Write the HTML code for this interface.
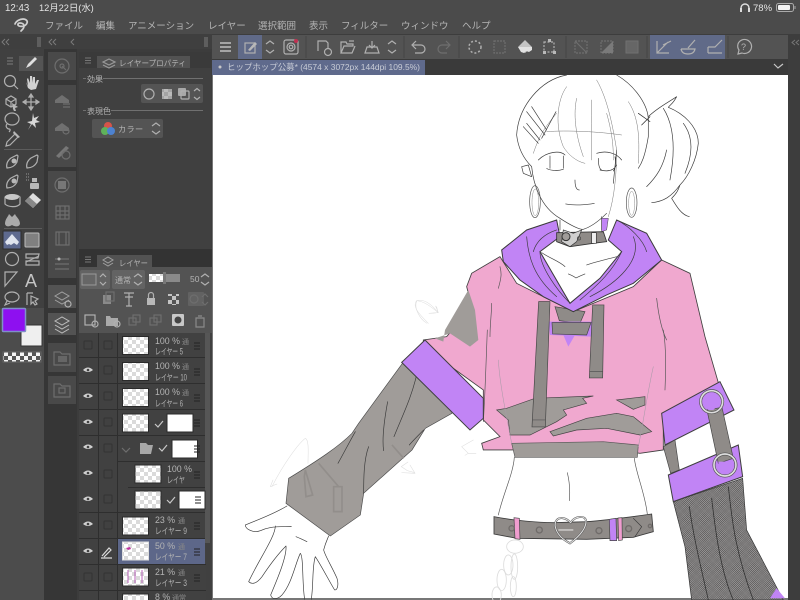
<!DOCTYPE html>
<html lang="ja"><head><meta charset="utf-8"><title>Clip Studio</title>
<style>
html,body{margin:0;padding:0;background:#404040;width:800px;height:600px;overflow:hidden}
svg{display:block;filter:blur(.3px)}
text{font-family:"Liberation Sans","Noto Sans CJK JP",sans-serif;fill:#b4b4b4}
.i{fill:none;stroke:#b0b0b0;stroke-width:1.2}
.d{fill:none;stroke:#6e6e6e;stroke-width:1.2}
.f{fill:#b8b8b8;stroke:none}
.t{fill:none;stroke:#3a3a3a;stroke-width:2;stroke-linecap:round;stroke-linejoin:round}
.g{fill:none;stroke:#8a8a8a;stroke-width:1.6;stroke-linecap:round}
.s{fill:none;stroke:#dcdcdc;stroke-width:2.5;stroke-linecap:round;stroke-linejoin:round}
</style></head><body>
<svg width="800" height="600" viewBox="0 0 800 600" xmlns="http://www.w3.org/2000/svg">
<defs>
<pattern id="ck" width="8" height="8" patternUnits="userSpaceOnUse"><rect width="8" height="8" fill="#fff"/><rect width="4" height="4" fill="#dadada"/><rect x="4" y="4" width="4" height="4" fill="#dadada"/></pattern>
<pattern id="ck2" width="8" height="8" patternUnits="userSpaceOnUse"><rect width="8" height="8" fill="#f4f4f4"/><rect width="4" height="4" fill="#555"/><rect x="4" y="4" width="4" height="4" fill="#555"/></pattern>
<pattern id="net" width="4" height="4" patternUnits="userSpaceOnUse" patternTransform="rotate(45)"><rect width="4" height="4" fill="#4e4c4c"/><circle cx="2" cy="2" r="1.25" fill="#e0e0e0"/></pattern>
</defs>

<!-- chrome -->
<rect width="800" height="34" fill="#4b4b4b"/>
<rect y="34" width="800" height="566" fill="#3d3d3d"/>
<text x="5" y="11" font-size="9.700" style="fill:#e4e4e4">12:43</text>
<text x="39" y="11" font-size="9.300" style="fill:#e4e4e4">12月22日(水)</text>
<path d="M741 11v-3a4 4 0 0 1 8 0v3" fill="none" stroke="#ddd" stroke-width="1.4"/><rect x="740" y="8" width="2" height="4" fill="#ddd"/><rect x="748" y="8" width="2" height="4" fill="#ddd"/>
<text x="753" y="11" font-size="9.500" style="fill:#e4e4e4">78%</text>
<rect x="776.500" y="3.500" width="17" height="8" rx="2" fill="none" stroke="#aaa"/><rect x="778" y="5" width="12" height="5" rx="1" fill="#f2f2f2"/><rect x="794.500" y="6" width="1" height="3" fill="#aaa"/>

<!-- logo -->
<path d="M15 24c1-3 5-5 8-5 3 0 5 2 4 4-1 3-5 4-8 3-2-1-1-3 1-3 2 0 4 1 4 3 0 2-1 3-3 5" fill="none" stroke="#d0d0d0" stroke-width="1.700" stroke-linecap="round"/>
<g font-size="9.500">
<text x="45" y="29">ファイル</text><text x="96" y="29">編集</text><text x="128" y="29">アニメーション</text><text x="208" y="29">レイヤー</text><text x="258" y="29">選択範囲</text><text x="309" y="29">表示</text><text x="341" y="29">フィルター</text><text x="401" y="29">ウィンドウ</text><text x="462" y="29">ヘルプ</text>
</g>

<!-- toolbar -->
<rect x="212" y="35" width="576" height="24" fill="#535353"/>
<rect x="238" y="35" width="24" height="24" fill="#606a88"/>
<rect x="650" y="35" width="75" height="24" fill="#606a88"/>
<path d="M220 43h11M220 47h11M220 51h11" fill="none" stroke="#c0c0c0" stroke-width="1.6"/>
<rect x="245" y="43" width="10" height="10" class="i"/><path d="M248 50l7-8 2 2-7 7z" class="f"/>
<path d="M266 44l4-3 4 3M266 50l4 3 4-3" class="i"/>
<rect x="284" y="40" width="14" height="14" rx="2" class="i"/><circle cx="291" cy="47" r="4" class="i"/><circle cx="291" cy="47" r="1.800" class="i"/><circle cx="296" cy="41" r="2" fill="#c03050"/>
<path d="M306 36v22M404 36v22M459 36v22M566 36v22M647 36v22M728 36v22" stroke="#454545"/>
<path d="M318 51V41h8l2 2v6" class="i"/><circle cx="328" cy="52" r="3.500" class="i"/>
<path d="M341 53V42h5l1 2h6v2h-9l-3 7h11l3-7" class="i"/><path d="M349 41h5" class="i"/>
<path d="M365 53h14l-2-6h-10zM372 41v7M369 45l3 3 3-3" class="i"/>
<path d="M388 44l4-3 4 3M388 50l4 3 4-3" class="i"/>
<path d="M413 45h8a4 4 0 0 1 0 8h-6M416 41l-4 4 4 4" class="i"/>
<path d="M449 45h-7a4 4 0 0 0 0 8h5M446 41l4 4-4 4" class="d"/>
<circle cx="475" cy="47" r="6" fill="none" stroke="#b0b0b0" stroke-width="1.5" stroke-dasharray="2 2"/>
<rect x="494" y="41" width="11" height="12" class="d" stroke-dasharray="2 1"/>
<path d="M525 40l7 7-7 6-7-6z" fill="#c4c4c4"/><path d="M518 47h14v3l-3 2-3-1-2 2-3-1z" fill="#e2e2e2"/>
<rect x="544" y="42" width="10" height="10" class="i" stroke-dasharray="2 1.500"/><rect x="548" y="39" width="3" height="3" class="f"/><rect x="543" y="51" width="3" height="3" class="f"/><rect x="553" y="51" width="3" height="3" class="f"/>
<rect x="575" y="41" width="12" height="12" class="d" stroke-dasharray="2 1"/><path d="M575 41l12 12" class="d"/>
<rect x="601" y="41" width="12" height="12" class="d" stroke-dasharray="2 1"/><path d="M613 41v12h-12z" fill="#7a7a7a"/>
<rect x="626" y="41" width="12" height="12" fill="#666" stroke="#707070"/>
<path d="M657 41v12h12M657 53l11-11M663 45l8-4" class="i"/>
<path d="M681 49h14q-1 5-7 5t-7-5M688 48l7-8" class="i"/>
<path d="M708 53h14M708 53v-6M708 47l7 0 7-7" class="i"/>
<path d="M738 44a7 7 0 1 1 4 9l-4 1 1-4a7 7 0 0 1-1-6z" class="i"/><text x="741" y="50" font-size="9">?</text>

<!-- tab strip -->
<rect x="212" y="59" width="576" height="16" fill="#3a3a3a"/>
<rect x="212" y="60" width="213" height="15" fill="#5f6a8c"/>
<circle cx="220" cy="67" r="1.500" fill="#c8c8c8"/>
<text x="227" y="70" font-size="8.600" textLength="193" lengthAdjust="spacingAndGlyphs" style="fill:#c8ccd6">ヒップホップ公募* (4574 x 3072px 144dpi 109.5%)</text>
<path d="M774 64l4 4 5-4" fill="none" stroke="#c8c8c8" stroke-width="1.200"/>

<!-- canvas -->
<rect x="212" y="75" width="576" height="523" fill="#fff"/>
<rect x="212" y="75" width="1" height="525" fill="#777"/>
<rect x="212" y="598" width="576" height="2" fill="#777"/>

<!-- arm / hand : zoom8 coords -->
<g transform="translate(212,290) scale(.3333)">
<path d="M575 215L440 400 420 430C380 470 320 510 230 565L222 640 355 738 445 675 455 610 600 480 640 415 720 370 720 230z" fill="#a09c99" stroke="#4a4a4a" stroke-width="2"/>
<path class="t" d="M615 250C600 320 570 380 546 440M527 335C515 400 510 450 515 482M470 470C455 510 455 570 455 610M430 425C410 460 395 490 378 520M635 420C615 440 600 455 592 465"/>
<path d="M320 520l60 70M540 465l35 40M280 540l22 75-20 5-5-60zM365 590h25v75h-25z" fill="none" stroke="#928e8b" stroke-width="5"/>
<path class="t" d="M225 648C180 675 135 690 100 705C100 718 125 730 145 722C160 715 180 708 238 710M190 708C190 740 140 810 110 875C120 885 135 880 150 860C170 830 200 790 222 768C225 800 195 870 176 915C180 930 195 930 210 915C240 880 250 820 265 790C275 800 270 880 278 928M298 928C305 880 300 830 310 800C330 830 355 880 368 900C378 900 380 880 375 865C360 830 340 800 335 780C340 760 345 750 350 738M252 740C265 745 275 750 285 755"/>
<path class="g" style="stroke:#ddd" d="M180 590C215 520 260 460 280 445C292 450 288 490 288 520M175 590l8-20M175 590l20-8M645 100C620 85 605 50 615 32C640 25 665 50 678 68M678 68l-4-18M678 68l-22 2M568 530l20-14M568 530l18 12 22 6"/>
</g>

<!-- head : zoom6 coords -->
<g transform="translate(400,70) scale(.3333)">
<path class="t" d="M350 195C355 110 420 30 500 15M650 15C710 50 745 110 745 150L745 200C735 260 725 280 715 295M350 195C355 240 375 270 395 290M395 290C400 340 420 410 480 445C510 465 540 480 550 478C575 470 600 450 620 430M640 340L650 240M480 450V480M605 440V480"/>
<path class="t" style="stroke-width:1.500;stroke:#777" d="M500 50C470 90 465 170 490 230C505 255 530 275 555 280M530 85C520 130 525 190 550 260M590 30C625 90 640 180 650 240C650 300 645 380 625 440M575 90C575 150 575 220 575 270M620 130C640 200 640 240 640 270M685 95C715 140 720 200 715 280M470 130C440 165 420 190 400 250M440 185C500 180 600 185 665 195"/>
<path class="t" d="M380 125L435 195M395 110L440 180M370 170L415 220M380 160L420 210M425 205L468 125"/>
<path class="t" d="M415 270C440 245 480 240 495 255M590 250C620 240 650 250 665 270M440 295C445 300 470 305 490 298M600 300C620 305 640 305 650 285M450 258V295M490 258V295M595 265Q595 295 605 300M645 260Q650 290 640 303M525 330Q525 360 538 360M497 402C520 407 560 405 583 400"/>
<path class="t" d="M365 290L385 285L395 320L370 310z"/>
<ellipse cx="405" cy="395" rx="16" ry="48" fill="none" stroke="#555" stroke-width="2"/><ellipse cx="406" cy="397" rx="10" ry="40" fill="none" stroke="#888" stroke-width="1.500"/>
<ellipse cx="695" cy="398" rx="16" ry="44" fill="none" stroke="#555" stroke-width="2"/><ellipse cx="695" cy="400" rx="9" ry="36" fill="none" stroke="#888" stroke-width="1.500"/>
<path class="t" d="M745 140C770 115 800 100 830 80C820 100 810 105 805 112C850 130 895 170 895 220C890 270 865 320 840 345C815 380 790 395 755 398M815 385C830 410 845 435 868 440M840 345C835 360 830 370 815 385M740 350C770 320 790 290 800 240M790 115C825 170 825 250 810 330M850 160C880 200 880 250 855 310"/>
<path class="t" style="stroke:#222" d="M715 130l35 25M725 165l25-25"/>
</g>

<!-- torso -->
<g transform="translate(400,70) scale(.3333)">
<path d="M300 560L215 610 200 650 215 710 140 800 70 810 70 830 250 960 250 1050 300 1100 245 1120 250 1140 335 1140 610 1135 720 1150 790 1140 790 1030 960 955 915 800 870 610 785 570 700 650 520 725 350 640z" fill="#f0a8cf" stroke="#3f3f3f" stroke-width="2.500"/>
</g>
<!-- grey bits : zoom7 coords -->
<g transform="translate(400,330) scale(.3333)">
<path d="M335 340L345 382H712L715 345 610 335z" fill="#a09c99" stroke="#555" stroke-width="2"/>
<path d="M105 25L130 35 135 0 205 -120 225 -60 235 30 210 50 150 10z" fill="#a09c99"/>
<path d="M290 240L320 235 405 205 580 198 548 205 560 220 490 240 500 255 470 275 390 315 330 315 325 270z" fill="#a09c99" stroke="#444" stroke-width="2"/>
<path d="M450 305L560 265 650 250 700 260 755 305 720 315 620 295 530 300 460 318z" fill="#a09c99" stroke="#444" stroke-width="2"/>
<path d="M650 210L735 200 735 225 700 238z" fill="#a09c99" stroke="#444" stroke-width="2"/>
<path class="g" style="stroke:#a89aa8" d="M295 90C300 170 320 260 335 340M760 110C740 200 730 280 715 350"/>
<path class="t" style="stroke:#555;stroke-width:2" d="M262 0C258 100 255 200 250 275M790 0C800 60 797 130 795 180M343 382C340 430 310 490 295 555M703 385C708 430 735 490 742 552M502 428C510 460 510 490 508 512"/>
<!-- cuffs -->
<path d="M75 30L5 97 210 300 250 265 250 205z" fill="#c184f5" stroke="#3f3f3f" stroke-width="3"/>
<path d="M960 155L1002 240 795 345 785 250z" fill="#c184f5" stroke="#3f3f3f" stroke-width="3"/>
<path d="M790 350L825 330 838 420 812 430z" fill="#8f8b88" stroke="#444" stroke-width="2"/>
<path d="M820 515L1028 445 1040 600 1150 810H875L855 650z" fill="url(#net)" stroke="#333" stroke-width="2"/>
<path class="t" style="stroke:#333;stroke-width:2.500" d="M868 530C880 620 905 720 925 810M935 505C945 590 960 720 1000 810M985 470C995 550 1000 650 1060 810"/>
<path d="M805 435L1015 345 1028 440 820 515z" fill="#c184f5" stroke="#3f3f3f" stroke-width="3"/>
<path d="M1110 805L1130 775 1155 805z" fill="#c184f5"/>
<path d="M921 240L966 232 1000 385 955 400z" fill="#8f8b88" stroke="#444" stroke-width="2"/>
<circle cx="935" cy="215" r="33" fill="none" stroke="#555" stroke-width="9"/><circle cx="935" cy="215" r="33" fill="none" stroke="#ddd" stroke-width="5"/><path d="M915 225a20 20 0 1 1 40 0l-15 15h-15z" fill="#c184f5"/>
<circle cx="975" cy="405" r="33" fill="none" stroke="#555" stroke-width="9"/><circle cx="975" cy="405" r="33" fill="none" stroke="#ddd" stroke-width="5"/><path d="M955 395h40a20 25 0 0 1-40 0z" fill="#c184f5"/>
<!-- belt -->
<path d="M282 560C340 572 420 578 460 578L560 575C630 570 700 560 755 552L760 605 700 622 560 628 350 625 282 612z" fill="#8f8b88" stroke="#3a3a3a" stroke-width="2.500"/>
<path d="M342 563L358 565 360 628 345 626z" fill="#f09dcf" stroke="#444" stroke-width="2"/>
<path d="M628 568L648 565 650 632 630 632z" fill="#c184f5" stroke="#444" stroke-width="2"/>
<path d="M654 564L666 563 667 630 656 632z" fill="#f09dcf" stroke="#444" stroke-width="2"/>
<path d="M510 640C480 625 462 600 466 578C475 555 500 565 512 578C525 558 555 555 558 572C560 600 530 625 510 640z" fill="none" stroke="#555" stroke-width="6"/><path d="M510 640C480 625 462 600 466 578C475 555 500 565 512 578C525 558 555 555 558 572C560 600 530 625 510 640z" fill="none" stroke="#e4e4e4" stroke-width="3"/>
<path d="M475 600H520" stroke="#fff" stroke-width="2.500"/>
<g fill="none" stroke="#706c6a" stroke-width="4"><circle cx="335" cy="595" r="8"/><circle cx="418" cy="600" r="9"/><circle cx="597" cy="602" r="9"/><circle cx="686" cy="596" r="9"/><circle cx="750" cy="588" r="5"/></g>
<path class="t" d="M700 565L725 590 705 620"/>
<!-- chain -->
<g class="s"><ellipse cx="345" cy="650" rx="25" ry="20"/><ellipse cx="325" cy="705" rx="14" ry="30"/><ellipse cx="343" cy="710" rx="10" ry="38"/><ellipse cx="305" cy="750" rx="14" ry="32"/><ellipse cx="340" cy="770" rx="9" ry="30"/><ellipse cx="290" cy="795" rx="14" ry="24"/></g>
<path class="g" style="stroke:#ddd" d="M220 330L185 350 205 370 228 370M205 370l-10 6M45 430L5 428M45 430L30 405"/>
</g>

<!-- laces then hood : zoom6 coords -->
<g transform="translate(400,70) scale(.3333)">
<path d="M465 710L555 725 540 760 478 752z" fill="#8f8b88" stroke="#444" stroke-width="2"/>
<path d="M445 755L580 755 575 800 450 795z" fill="#c184f5"/>
<path d="M416 695L450 695 436 1071 396 1071z" fill="#8f8b88" stroke="#444" stroke-width="2"/>
<path d="M578 705L612 705 608 924 568 924z" fill="#8f8b88" stroke="#444" stroke-width="2"/>
<path d="M456 758L573 758 560 795 458 792z" fill="#8f8b88" stroke="#444" stroke-width="2"/>
<path d="M490 795H525L505 830z" fill="#c184f5"/>
<path d="M396 1050h40M568 905h40" stroke="#555" stroke-width="2"/>
<path d="M470 450L380 480 305 540 310 575 360 630 430 680 520 725 620 675 700 640 785 570 740 490 650 450 625 510 665 545 600 625 510 700 420 545 480 500z" fill="#c184f5" stroke="#3a3a3a" stroke-width="3"/>
<path d="M605 445L625 445 620 480 605 485z" fill="#c184f5" stroke="#444" stroke-width="1.500"/>
<path class="t" d="M380 500C385 560 400 620 470 680M420 545C420 590 470 660 510 700M700 500C730 570 650 640 570 680M665 545C640 600 600 640 540 690M650 450C690 470 730 510 740 545M470 480C440 490 410 510 400 545"/>
<path class="t" style="stroke:#444" d="M425 548C450 565 480 575 495 590M560 585C590 575 620 568 650 560M505 612Q520 618 528 624Q540 618 555 612"/>
<path d="M470 488L610 485 620 515 580 520 510 530 470 515z" fill="#8f8b88" stroke="#333" stroke-width="2.500"/>
<path d="M490 480L520 490 545 480 530 515 510 530 485 515z" fill="#d0cfcf" stroke="#333" stroke-width="2"/><circle cx="498" cy="500" r="12" fill="#a09c99" stroke="#333" stroke-width="3"/><circle cx="537" cy="505" r="5" fill="none" stroke="#444" stroke-width="2"/>
<path d="M575 488h14v32h-14z" fill="#eee" stroke="#333" stroke-width="2"/>
<path class="t" style="stroke:#555" d="M300 590C305 610 305 620 295 655M275 700C275 730 270 760 270 800M770 685C775 730 785 780 800 810"/>
<path class="g" style="stroke:#ddd" d="M85 760C60 735 35 710 50 692C75 695 95 712 115 728M115 728l-8-20M115 728l-28 2"/>
</g>

<!-- right dock -->
<rect x="788" y="34" width="12" height="566" fill="#3d3d3d"/>
<path d="M795 40l-3 2.500 3 2.500M799 40l-3 2.500 3 2.500" fill="none" stroke="#777"/>

<!-- left: panels -->
<rect x="0" y="34" width="212" height="566" fill="#3c3c3c"/>
<rect x="0" y="34" width="212" height="15" fill="#3f3f3f"/>
<path d="M5 39l-3 3 3 3M9 39l-3 3 3 3M52 39l-3 3 3 3M56 39l-3 3 3 3M74 39l-3 3 3 3" fill="none" stroke="#7a7a7a"/>
<rect x="37" y="37" width="4" height="10" fill="#5e5e5e"/><rect x="204" y="37" width="4" height="10" fill="#5e5e5e"/>
<!-- tool column -->
<rect x="0" y="49" width="44" height="259" fill="#404040"/>
<rect x="0" y="308" width="44" height="292" fill="#4c4c4c"/>
<rect x="44" y="49" width="33" height="551" fill="#363636"/>
<rect x="19" y="56" width="24" height="15" fill="#545454"/>
<path d="M7 58h6M7 61h6M7 64h6" stroke="#7c7c7c"/>
<path d="M26 68l2-4 7-7 2 2-7 7z" fill="#e0e0e0"/>
<!-- tools -->
<circle cx="10" cy="81" r="5.500" class="i"/><path d="M14 85l4 4" class="i" stroke-width="2"/>
<path d="M26 82l2 6 3 2 5-1 3-9-2 0-2 4v-7l-2 0v6l-1-7h-2v7l-2-5-1 1 1 7z" fill="#d0d0d0"/>
<path d="M6 99l5-3 5 3v5l-5 3-5-3zM6 99l5 3 5-3M11 102v5" class="i"/><path d="M12 103l6 4-3 1 1 3-2 0-1-2z" class="f"/>
<path d="M31 94v16M23 102h16M31 94l-2 3h4zM31 110l-2-3h4zM23 102l3-2v4zM39 102l-3-2v4z" class="i"/>
<ellipse cx="12" cy="119" rx="7" ry="6" class="i"/><path d="M7 124c-2 2 0 5 2 5s1 2 0 3" class="i"/>
<path d="M33 113l1 5 5-2-3 4 4 2-5 1 1 5-4-4-4 6 3-6-4-2 5-1z" fill="#d8d8d8"/>
<path d="M6 146l1-4 8-8 3 3-8 8z" class="i"/><path d="M14 131l6 6-2 1-5-5z" class="f"/>
<path d="M4 149.500h38" stroke="#5c5c5c"/>
<g class="i"><path d="M7 168c-1-3 0-7 4-10l6-3 1 1-1 6c-2 4-6 6-10 6z"/><path d="M27 168c-1-3 0-7 4-10l6-3 1 1-1 6c-2 4-6 6-10 6z"/><path d="M7 188c-1-3 0-7 4-10l6-3 1 1-1 6c-2 4-6 6-10 6z"/></g>
<circle cx="14" cy="161" r="2.500" class="f"/><circle cx="14" cy="181" r="2.500" class="f"/>
<rect x="30" y="183" width="9" height="6" rx="1" class="f"/><rect x="32" y="178" width="5" height="4" class="f"/><path d="M26 174h3M26 177h3M26 180h3" stroke="#999" stroke-dasharray="1 1"/>
<path d="M5 197c3-3 12-3 15 0v7c-3 4-12 3-15 0z" class="i"/><ellipse cx="12" cy="197" rx="7" ry="3" fill="#c8c8c8"/>
<path d="M25 201l8-8 8 7-8 8z" fill="#dedede"/><path d="M25 201l4-4 8 7-4 4z" fill="#888"/>
<path d="M5 224c0-5 3-7 4-10l3 3 3-3c1 3 5 5 5 10-1 3-5 3-8 1-3 2-6 2-7-1z" fill="#aaa"/>
<path d="M4 228.500h38" stroke="#5c5c5c"/>
<rect x="3" y="231" width="18" height="18" fill="#5e6a8f" stroke="#2e2e2e"/>
<path d="M5 242l7-8 7 8-2 3-3-2-3 2-2-1-2 1z" fill="#dfe4ee"/>
<rect x="25" y="233" width="14" height="14" rx="1" fill="#808080" stroke="#bbb"/>
<circle cx="12" cy="259" r="6.500" class="i"/>
<path d="M26 254h13l-1 4H26zM26 261h13v4H26z" class="i"/><path d="M26 262l13-6" class="i"/>
<path d="M5 272h12L5 286z" class="i" stroke-width="2"/>
<text x="25" y="287" font-size="18" style="fill:#c4c4c4">A</text>
<ellipse cx="12" cy="297" rx="7" ry="5" class="i"/><path d="M7 301l-2 4 5-2" class="i"/>
<path d="M27 293v12M27 293h6M31 296l7 3-3 2 2 3-2 1-2-3-2 2z" class="i"/>
<!-- colours -->
<rect x="21" y="325" width="21" height="21" fill="#efefef" stroke="#333"/>
<rect x="2.500" y="308.500" width="23" height="23" rx="1" fill="#8e10f0" stroke="#7f8fc8" stroke-width="1.500"/>
<rect x="2" y="351" width="40" height="12" rx="2" fill="#5a5a5a"/>
<rect x="3.500" y="352.500" width="37" height="9" rx="1.500" fill="url(#ck2)"/>

<!-- palette dock -->
<g fill="#494949">
<rect x="48" y="52" width="28" height="28"/><rect x="48" y="85" width="28" height="82"/><rect x="48" y="171" width="28" height="107"/>
<rect x="48" y="285" width="28" height="23" fill="#535353"/><rect x="48" y="313" width="28" height="22" fill="#535353"/><rect x="48" y="343" width="28" height="29"/><rect x="48" y="376" width="28" height="28"/>
</g>
<circle cx="62" cy="66" r="7" class="d"/><circle cx="62" cy="66" r="2" class="d"/><path d="M62 66l4 4" class="d"/>
<path d="M55 100l7-5 7 5v3H55z" fill="#707070"/><path d="M63 104h7M63 107h7" class="d"/>
<path d="M55 128l7-5 7 5v3H55z" fill="#707070"/><circle cx="66" cy="131" r="3" class="d"/>
<path d="M56 156l10-10 3 2-10 10z" fill="#777"/><circle cx="66" cy="155" r="4" class="d"/>
<circle cx="62" cy="185" r="7" class="d"/><rect x="58" y="181" width="8" height="8" fill="#777"/>
<rect x="56" y="206" width="13" height="13" class="d"/><path d="M60 206v13M65 206v13M56 211h13M56 215h13" class="d"/>
<rect x="56" y="232" width="13" height="13" class="d"/><path d="M59 232v13M66 232v13" class="d"/>
<path d="M55 259h14M55 264h14M55 269h14" class="d"/><circle cx="59" cy="259" r="1.500" class="f"/>
<path d="M55 296l7-4 7 4-7 4zM55 300l7 4 7-4" fill="none" stroke="#a0a0a0"/><circle cx="68" cy="304" r="3" class="i"/>
<path d="M55 321l7-4 7 4-7 4zM55 325l7 4 7-4M55 329l7 4 7-4" fill="none" stroke="#bdbdbd"/>
<path d="M54 352h6l2 2h8v11H54z" class="d"/><rect x="58" y="356" width="9" height="6" fill="#666"/>
<path d="M54 384h6l2 2h8v11H54z" class="d"/><rect x="59" y="388" width="6" height="5" class="d"/>

<!-- property panel -->
<rect x="79" y="52" width="132" height="196" fill="#404040"/>
<rect x="79" y="52" width="132" height="16" fill="#3a3a3a"/>
<rect x="97" y="56" width="93" height="12" fill="#525252"/>
<path d="M85 58h6M85 60.500h6M85 63h6" stroke="#777"/>
<path d="M103 62l6-3 6 3-6 3zM103 65l6 3 6-3" class="i" style="stroke:#999"/>
<text x="119" y="66" font-size="8.200" textLength="67" lengthAdjust="spacingAndGlyphs">レイヤープロパティ</text>
<path d="M83 78.500h3M103 78.500h100M83 110.500h3M111 110.500h92" stroke="#707070"/>
<text x="87" y="82" font-size="8">効果</text>
<text x="87" y="114" font-size="8">表現色</text>
<rect x="141" y="84" width="62" height="19" rx="2" fill="#545454"/>
<circle cx="149" cy="94" r="5" class="i"/>
<rect x="162" y="89" width="10" height="10" fill="url(#ck)" opacity=".6"/>
<rect x="178" y="88" width="8" height="8" rx="1" fill="#a8a8a8"/><rect x="181" y="91" width="8" height="8" rx="1" class="i"/>
<path d="M194 91l3-2.500 3 2.500M194 97l3 2.500 3-2.500" class="i"/>
<rect x="92" y="119" width="71" height="19" rx="2" fill="#545454"/>
<circle cx="108" cy="126" r="4" fill="#d6534a"/><circle cx="105" cy="131" r="4" fill="#5fb25a"/><circle cx="111" cy="131" r="4" fill="#4d82d0"/>
<text x="118" y="132" font-size="8.200" style="letter-spacing:.3px">カラー</text>
<path d="M152 126l4-3 4 3M152 131l4 3 4-3" class="i"/>

<!-- layer panel -->
<rect x="79" y="248" width="133" height="352" fill="#404040"/>
<rect x="79" y="249" width="133" height="18" fill="#333"/>
<rect x="97" y="255" width="55" height="12" fill="#525252"/>
<rect x="79" y="267" width="133" height="66" fill="#535353"/>
<path d="M85 257h6M85 259.500h6M85 262h6" stroke="#777"/>
<path d="M103 260l5-3 5 3-5 3zM103 263l5 3 5-3" fill="none" stroke="#a0a0a0"/>
<text x="119" y="266" font-size="8.200" textLength="29" lengthAdjust="spacingAndGlyphs">レイヤー</text>
<rect x="80" y="270" width="30" height="19" rx="2" fill="#636363"/>
<rect x="82" y="274" width="14" height="11" fill="#666" stroke="#9a9a9a"/>
<path d="M100 277l3-3 3 3M100 282l3 3 3-3" class="i"/>
<rect x="112" y="270" width="33" height="19" rx="2" fill="#636363"/>
<text x="115" y="283" font-size="8">通常</text>
<path d="M134 277l4-3 4 3M134 282l4 3 4-3" class="i"/>
<rect x="149" y="274" width="15" height="8" fill="url(#ck)"/><rect x="164" y="274" width="16" height="8" fill="#8a8a8a"/><rect x="163" y="272" width="3" height="12" fill="#777"/>
<text x="190" y="282" font-size="8.500">50</text>
<path d="M201 277l4-3 4 3M201 282l4 3 4-3" class="i"/>
<rect x="103" y="295" width="8" height="9" fill="#8a8a8a"/><rect x="106" y="292" width="8" height="9" class="d"/>
<path d="M124 293h10M129 293v13M125 297h8M126 306h6" class="i" stroke-width="2"/>
<rect x="147" y="298" width="8" height="7" class="f"/><path d="M148.500 298v-3a2.500 2.500 0 0 1 5 0v3" class="i"/>
<rect x="168" y="294" width="11" height="11" fill="url(#ck2)" opacity=".7"/>
<rect x="188" y="292" width="16" height="14" rx="1" fill="#626262"/><circle cx="194" cy="299" r="4" class="d" fill="#444"/><path d="M202 297l3-3 3 3M202 302l3 3 3-3" class="d"/>
<rect x="85" y="315" width="10" height="10" class="i"/><circle cx="95" cy="324" r="3" class="i"/>
<path d="M106 316h4l1 2h7v8h-12z" fill="#aaa"/><circle cx="117" cy="324" r="3" class="i"/>
<rect x="129" y="318" width="7" height="7" class="d"/><rect x="133" y="315" width="7" height="7" class="d"/>
<rect x="150" y="318" width="7" height="7" class="d"/><rect x="154" y="315" width="7" height="7" class="d"/>
<rect x="172" y="314" width="12" height="12" rx="1" fill="#c8c8c8"/><circle cx="178" cy="320" r="3.500" fill="#444"/>
<path d="M196 318h8v9h-8zM198 316h4" class="i" style="stroke:#8a8a8a"/>
<rect x="79" y="333" width="127" height="267" fill="#414141"/>
<rect x="117" y="539" width="88" height="25" fill="#5d6789"/>
<path d="M79 357.500h127M79 383.500h127M79 409.500h127M79 435.500h127M117 461.500h89M128 487.500h78M79 512.500h127M79 538.500h127M79 564.500h127M79 590.500h127" stroke="#2e2e2e"/>
<path d="M98.500 333v267M117.500 333v267" stroke="#2e2e2e"/>
<rect x="205" y="333" width="5" height="210" fill="#565656"/>

<!-- eyes -->
<g fill="#d0d0d0">
<path d="M83 370q5-5 10 0q-5 4-10 0zM83 396q5-5 10 0q-5 4-10 0zM83 422q5-5 10 0q-5 4-10 0zM83 447q5-5 10 0q-5 4-10 0zM83 473q5-5 10 0q-5 4-10 0zM83 499q5-5 10 0q-5 4-10 0zM83 524q5-5 10 0q-5 4-10 0zM83 551q5-5 10 0q-5 4-10 0z"/>
</g>
<g fill="#414141"><circle cx="88" cy="370" r="1.300"/><circle cx="88" cy="396" r="1.300"/><circle cx="88" cy="422" r="1.300"/><circle cx="88" cy="447" r="1.300"/><circle cx="88" cy="473" r="1.300"/><circle cx="88" cy="499" r="1.300"/><circle cx="88" cy="524" r="1.300"/><circle cx="88" cy="551" r="1.300"/></g>
<g fill="none" stroke="#333"><rect x="84" y="341" width="8" height="8" rx="1"/><rect x="84" y="573" width="8" height="8" rx="1"/>
<rect x="104" y="341" width="8" height="8" rx="1"/><rect x="104" y="366" width="8" height="8" rx="1"/><rect x="104" y="392" width="8" height="8" rx="1"/><rect x="104" y="418" width="8" height="8" rx="1"/><rect x="104" y="444" width="8" height="8" rx="1"/><rect x="104" y="470" width="8" height="8" rx="1"/><rect x="104" y="495" width="8" height="8" rx="1"/><rect x="104" y="521" width="8" height="8" rx="1"/><rect x="104" y="573" width="8" height="8" rx="1"/></g>
<path d="M101 558h11M102 556l7-8 2 2-7 7" class="i" style="stroke:#ddd"/>

<!-- thumbs -->
<g fill="url(#ck)" stroke="#2a2a2a">
<rect x="122.500" y="336.500" width="26" height="18"/><rect x="122.500" y="362.500" width="26" height="18"/><rect x="122.500" y="388.500" width="26" height="18"/><rect x="122.500" y="414" width="26" height="18"/>
<rect x="135" y="465" width="26" height="18"/><rect x="135" y="491" width="26" height="18"/><rect x="122.500" y="517" width="26" height="18"/><rect x="122.500" y="542" width="26" height="18" stroke="#ddd"/><rect x="122.500" y="568" width="26" height="18"/><rect x="122.500" y="594" width="26" height="18"/>
</g>
<path d="M126 548l4-1 1 2-3 1z" fill="#c030a0"/>
<g stroke="#b050b0" stroke-width="1.500" opacity=".6" fill="none"><path d="M128 570v13M135 570v13M142 570v13"/></g>
<g fill="#fff" stroke="#2a2a2a"><rect x="167" y="414" width="26" height="18"/><rect x="172" y="440" width="25.500" height="18"/><rect x="179" y="491" width="26" height="18"/></g>
<path d="M155 424l3 3 5-6M159 448l3 3 5-6M167 500l3 3 5-6" fill="none" stroke="#c8c8c8" stroke-width="1.200"/>
<path d="M122 448l4 4 4-4" class="d"/>
<path d="M140 443h6l2 2h5l-2 9h-11z" fill="#a8a8a8"/>

<!-- layer text -->
<g font-size="8.800">
<text x="155" y="344">100 %</text><text x="155" y="354.500" textLength="28" lengthAdjust="spacingAndGlyphs">レイヤー 5</text>
<text x="155" y="369">100 %</text><text x="155" y="380.500" textLength="32" lengthAdjust="spacingAndGlyphs">レイヤー 10</text>
<text x="155" y="395">100 %</text><text x="155" y="406.500" textLength="28" lengthAdjust="spacingAndGlyphs">レイヤー 6</text>
<text x="167" y="472">100 %</text><text x="167" y="483" textLength="18" lengthAdjust="spacingAndGlyphs">レイヤ</text>
<text x="155" y="523">23 %</text><text x="155" y="534" textLength="32" lengthAdjust="spacingAndGlyphs">レイヤー 9</text>
<text x="155" y="549">50 %</text><text x="155" y="560" textLength="32" lengthAdjust="spacingAndGlyphs">レイヤー 7</text>
<text x="155" y="575">21 %</text><text x="155" y="586" textLength="32" lengthAdjust="spacingAndGlyphs">レイヤー 3</text>
<text x="155" y="600">8 %</text>
</g>
<g font-size="7"><text x="182" y="344" style="fill:#888">通</text><text x="182" y="369" style="fill:#888">通</text><text x="182" y="395" style="fill:#888">通</text><text x="178" y="523" style="fill:#888">通</text><text x="178" y="549" style="fill:#888">通</text><text x="178" y="575" style="fill:#888">通</text><text x="172" y="600" style="fill:#888">通常</text></g>
<!-- row menus -->
<g stroke="#222"><path d="M194 343h6M194 346h6M194 349h6M194 369h6M194 372h6M194 375h6M194 395h6M194 398h6M194 401h6M194 420h6M194 423h6M194 426h6M194 472h6M194 475h6M194 478h6M194 523h6M194 526h6M194 529h6M194 549h6M194 552h6M194 555h6M194 575h6M194 578h6M194 581h6M194 446h6M194 449h6M194 452h6M195 497h6M195 500h6M195 503h6"/></g>
</svg>
</body></html>
